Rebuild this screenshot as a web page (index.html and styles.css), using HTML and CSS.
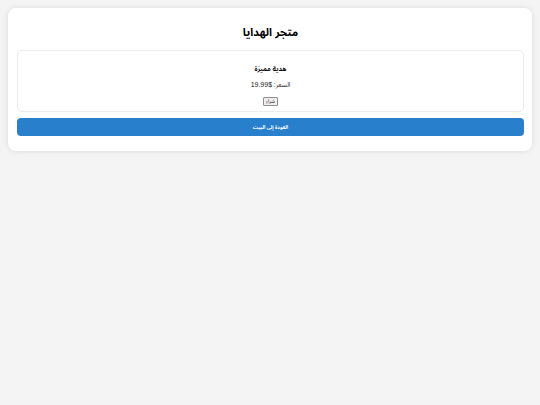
FILE: index.html
```html
<!DOCTYPE html>
<html lang="ar" dir="rtl">
<head>
<meta charset="utf-8">
<title>متجر الهدايا</title>
<link rel="stylesheet" href="styles.css">
</head>
<body>
<div class="container">
  <h1 class="title">متجر الهدايا</h1>
  <div class="product">
    <h2 class="product-name">هدية مميزة</h2>
    <p class="price">السعر: <span class="amount">19.99$</span></p>
    <button class="buy">شراء</button>
  </div>
  <button class="back">العودة إلى البيت</button>
</div>
</body>
</html>
```
FILE: styles.css
```css
html, body {
  margin: 0;
  padding: 0;
}
body {
  background: #f4f4f4;
  font-family: "Liberation Sans", "Noto Sans Arabic", "Noto Naskh Arabic", "DejaVu Sans Condensed", "DejaVu Sans", sans-serif;
  padding: 8px;
  min-height: 405px;
  box-sizing: border-box;
}
.container {
  background: #ffffff;
  border-radius: 8px;
  box-shadow: 0 0 6px rgba(0, 0, 0, 0.1);
  padding: 15px 8px 15px 9px;
  display: flex;
  flex-direction: column;
}
.title {
  font-size: 11px;
  line-height: 18px;
  font-weight: bold;
  text-align: center;
  margin: 0 0 9px;
  color: #000;
}
.product {
  border: 1px solid #ececec;
  border-radius: 5px;
  padding: 13px 0 5px;
  display: flex;
  flex-direction: column;
  align-items: center;
}
.product-name {
  font-size: 6.5px;
  line-height: 10px;
  font-weight: bold;
  margin: 0 0 6px;
  color: #111;
}
.price {
  font-size: 6.5px;
  line-height: 10px;
  margin: 0 0 7px;
  color: #222;
}
.amount {
  direction: ltr;
  unicode-bidi: isolate;
  font-size: 7px;
}
.buy {
  font-family: inherit;
  font-size: 5px;
  line-height: 7px;
  height: 9px;
  padding: 0 2px;
  background: #efefef;
  border: 1px solid #8f8f8f;
  border-radius: 1px;
  color: #222;
}
.back {
  margin-top: 6px;
  height: 18px;
  background: #2880cd;
  color: #ffffff;
  border: none;
  border-radius: 4px;
  font-family: inherit;
  font-size: 5px;
  font-weight: bold;
  padding: 0;
}
```
